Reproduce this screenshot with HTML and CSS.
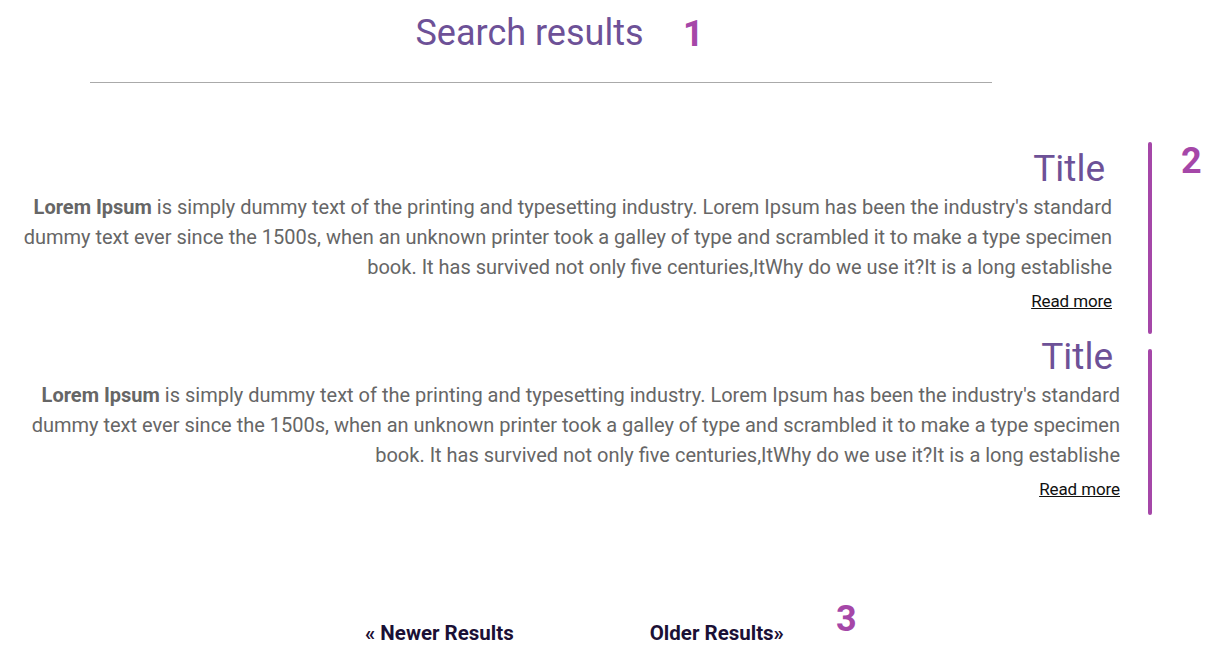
FILE: index.html
```html
<!DOCTYPE html>
<html lang="en">
<head>
  <meta charset="UTF-8" />
  <title>Search results</title>
  <link rel="stylesheet" href="styles.css">
</head>
<body>
  <header class="page-head">
    <h1>Search results</h1>
    <span class="marker marker-head">1</span>
  </header>

  <main class="results">
    <article class="result result-first">
      <div class="result-body">
        <h2 class="result-title">Title</h2>
        <p class="result-text"><strong>Lorem Ipsum</strong> is simply dummy text of the printing and typesetting industry. Lorem Ipsum has been the industry's standard dummy text ever since the 1500s, when an unknown printer took a galley of type and scrambled it to make a type specimen book. It has survived not only five centuries,ItWhy do we use it?It is a long establishe</p>
        <a class="read-more" href="#">Read more</a>
      </div>
      <span class="result-bar"></span>
      <span class="marker marker-results">2</span>
    </article>

    <article class="result result-second">
      <div class="result-body">
        <h2 class="result-title">Title</h2>
        <p class="result-text"><strong>Lorem Ipsum</strong> is simply dummy text of the printing and typesetting industry. Lorem Ipsum has been the industry's standard dummy text ever since the 1500s, when an unknown printer took a galley of type and scrambled it to make a type specimen book. It has survived not only five centuries,ItWhy do we use it?It is a long establishe</p>
        <a class="read-more" href="#">Read more</a>
      </div>
      <span class="result-bar"></span>
    </article>
  </main>

  <nav class="pager">
    <a href="#">&laquo; Newer Results</a>
    <a href="#">Older Results&raquo;</a>
    <span class="marker marker-pager">3</span>
  </nav>
</body>
</html>
```

FILE: styles.css
```css
body {
  font-family: Roboto, 'Noto Sans', sans-serif;
  margin: 0;
  background: #ffffff;
  color: #666666;
}

a {
  color: inherit;
}

.marker {
  position: absolute;
  font-size: 36px;
  line-height: 36px;
  font-weight: 700;
  color: #a547a8;
}

.page-head {
  position: relative;
  width: 902px;
  margin-left: 90px;
  border-bottom: 1px solid #aaaaaa;
}

.page-head h1 {
  margin: 0;
  padding: 10px 23px 26px 0;
  font-size: 36px;
  line-height: 46px;
  font-weight: 400;
  text-align: center;
  color: #6d5197;
}

.marker-head {
  left: 593px;
  top: 16px;
}

.results {
  width: 1136px;
  margin-top: 62px;
  padding-left: 16px;
}

.result {
  position: relative;
  display: flex;
}

.result + .result {
  margin-top: 20px;
}

.result-body {
  flex: 1;
  text-align: right;
}

.result-title {
  margin: 0;
  padding: 1px 7px 0 0;
  font-size: 37px;
  line-height: 46px;
  font-weight: 400;
  color: #6d5197;
}

.result-text {
  margin: 0;
  font-size: 20px;
  line-height: 30px;
}

.result-text strong {
  font-weight: 700;
}

.read-more {
  display: inline-block;
  margin-top: 7px;
  font-size: 17px;
  line-height: 24px;
  letter-spacing: -0.1px;
  color: #111111;
}

.result-bar {
  width: 4px;
  border-radius: 2px;
  background: #a547a8;
}

.result-first .result-bar {
  margin: -3px 0 -21px 36px;
}

.result-second .result-body {
  margin-right: -7px;
}

.result-second .result-bar {
  margin: 16px 0 -14px 35px;
}

.marker-results {
  left: 1165px;
  top: -2px;
}

.pager {
  position: relative;
  display: flex;
  gap: 136px;
  margin-top: 120px;
  padding-left: 365px;
}

.pager a {
  font-size: 20.5px;
  line-height: 24px;
  font-weight: 700;
  color: #1b1035;
  text-decoration: none;
}

.marker-pager {
  left: 836px;
  top: -20px;
}
```
